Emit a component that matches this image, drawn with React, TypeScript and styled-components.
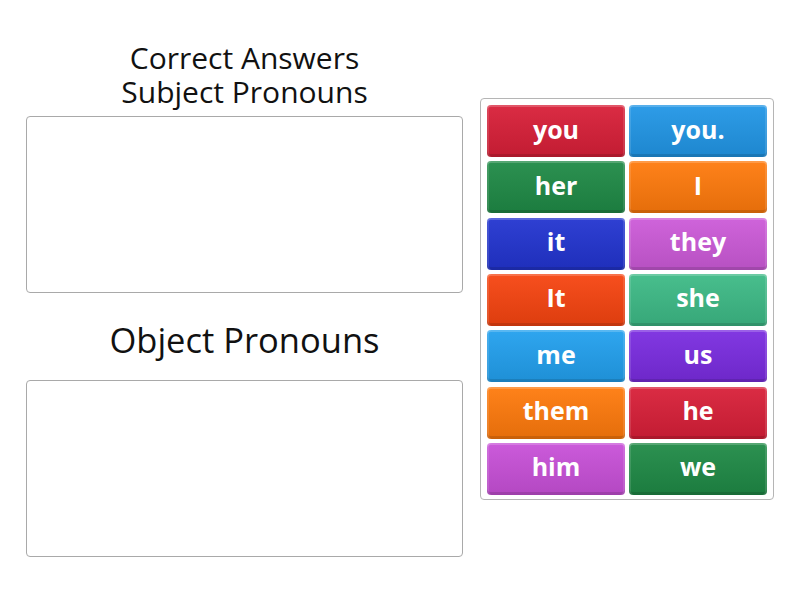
import styled, { createGlobalStyle } from "styled-components";

const tiles = [
  { id: 1, word: "you", color: "#d81f38" },
  { id: 2, word: "you.", color: "#2196e6" },
  { id: 3, word: "her", color: "#1f8a46" },
  { id: 4, word: "I", color: "#ff7a0c" },
  { id: 5, word: "it", color: "#2234d0" },
  { id: 6, word: "they", color: "#cc5ad8" },
  { id: 7, word: "It", color: "#f64410" },
  { id: 8, word: "she", color: "#3dba86" },
  { id: 9, word: "me", color: "#22a0ee" },
  { id: 10, word: "us", color: "#7a2ce0" },
  { id: 11, word: "them", color: "#ff7a0c" },
  { id: 12, word: "he", color: "#d81f38" },
  { id: 13, word: "him", color: "#c850d8" },
  { id: 14, word: "we", color: "#1f8a46" },
];

const App = () => {
  return (
    <>
      <GlobalStyle />
      <Page>
        <Groups>
          <Heading>
            Correct Answers
            <br />
            Subject Pronouns
          </Heading>
          <DropZone />
          <Heading $large>Object Pronouns</Heading>
          <DropZone />
        </Groups>
        <Bank>
          {tiles.map((tile) => (
            <Tile key={tile.id} $color={tile.color}>
              {tile.word}
            </Tile>
          ))}
        </Bank>
      </Page>
    </>
  );
};

export default App;

// Styled Components
const GlobalStyle = createGlobalStyle`
  body {
    margin: 0;
    background: #ffffff;
    font-family: "Open Sans", "Noto Sans", sans-serif;
  }
`;

const Page = styled.div`
  display: flex;
  align-items: flex-start;
  gap: 17px;
  padding: 41px 0 0 26px;
  width: 800px;
  height: 600px;
  box-sizing: border-box;
`;

const Groups = styled.div`
  width: 437px;
  display: flex;
  flex-direction: column;
`;

const Heading = styled.h2<{ $large?: boolean }>`
  margin: ${(p) => (p.$large ? "27px 0 20px" : "0 0 7px")};
  font-size: ${(p) => (p.$large ? "34.5px" : "30px")};
  line-height: ${(p) => (p.$large ? "40px" : "34px")};
  font-weight: 400;
  color: #111111;
  text-align: center;
`;

const DropZone = styled.div`
  height: 177px;
  box-sizing: border-box;
  border: 1px solid #a9a9a9;
  border-radius: 4px;
  background: #ffffff;
`;

const Bank = styled.div`
  margin-top: 57px;
  width: 294px;
  box-sizing: border-box;
  padding: 6px 6px 4px;
  border: 1px solid #b5b5b5;
  border-radius: 4px;
  display: grid;
  grid-template-columns: repeat(2, 138px);
  grid-auto-rows: 52px;
  column-gap: 4px;
  row-gap: 4.33px;
`;

const Tile = styled.div<{ $color: string }>`
  display: flex;
  align-items: center;
  justify-content: center;
  border-radius: 4px;
  background:
    linear-gradient(rgba(255, 255, 255, 0.06), rgba(0, 0, 0, 0.1)),
    ${(p) => p.$color};
  box-shadow:
    inset 0 2px 0 rgba(255, 255, 255, 0.2),
    inset 2px 0 0 rgba(255, 255, 255, 0.12),
    inset -2px 0 0 rgba(255, 255, 255, 0.12),
    inset 0 -3px 0 rgba(0, 0, 0, 0.12);
  color: #ffffff;
  font-size: 25px;
  font-weight: 700;
  padding-bottom: 5px;
  box-sizing: border-box;
`;
